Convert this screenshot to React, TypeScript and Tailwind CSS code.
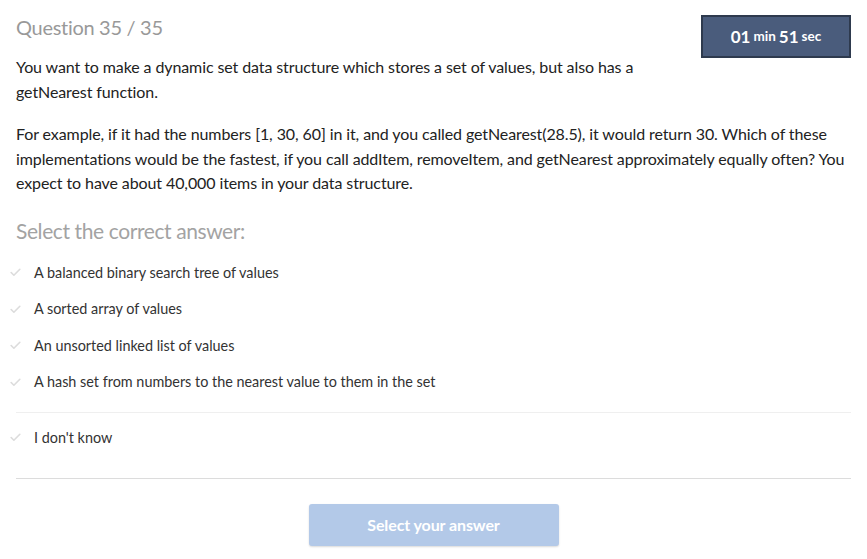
import { Check } from "lucide-react";

const options = [
	"A balanced binary search tree of values",
	"A sorted array of values",
	"An unsorted linked list of values",
	"A hash set from numbers to the nearest value to them in the set",
];

function Option({ label }: { label: string }) {
	return (
		<div className="flex items-center h-[36.5px] -ml-[7px]">
			<Check size={13} strokeWidth={3} className="text-[#dcdcdc] mr-[12px]" />
			<span className="text-[14.4px] text-[#333]">{label}</span>
		</div>
	);
}

export default function App() {
	return (
		<div
			className="w-[867px] h-[559px] bg-white px-4 pt-[14px] overflow-hidden"
			style={{ fontFamily: "Lato, 'Open Sans', sans-serif" }}
		>
			<div className="flex justify-between items-start">
				<h1 className="text-[20px] text-[#999] leading-[26px] tracking-[-0.3px]">
					Question 35 / 35
				</h1>
				<div className="w-[150px] h-[43px] mt-px bg-[#4a5c7c] border-2 border-[#2e3a4e] flex items-center justify-center text-white font-bold">
					<span className="text-[17px]">01</span>
					<span className="text-[13.5px] ml-[3px] mr-[3px]">min</span>
					<span className="text-[17px]">51</span>
					<span className="text-[13.5px] ml-[3px]">sec</span>
				</div>
			</div>

			<div className="text-[16px] text-[#222] leading-[24.5px] tracking-[-0.1px] -mt-[3px]">
				<p>
					You want to make a dynamic set data structure which stores a set of values, but also has a
					<br />
					getNearest function.
				</p>
				<p className="mt-[18px]">
					For example, if it had the numbers [1, 30, 60] in it, and you called getNearest(28.5), it would
					return 30. Which of these implementations would be the fastest, if you call addItem, removeItem,
					and getNearest approximately equally often? You expect to have about 40,000 items in your data
					structure.
				</p>
			</div>

			<h2 className="text-[21px] text-[#a3a3a3] mt-[22px] leading-[26px] tracking-[-0.4px]">
				Select the correct answer:
			</h2>

			<div className="mt-[11px]">
				{options.map((o) => (
					<Option key={o} label={o} />
				))}
			</div>
			<div className="border-t border-[#efefef] mt-[11px] pt-[7px]">
				<Option label="I don't know" />
			</div>

			<div className="border-t border-[#dcdcdc] mt-[22px] flex justify-center pt-[25px]">
				<button className="w-[250px] h-[42px] rounded-[3px] bg-[#b3c9e8] text-white font-bold text-[16px] tracking-[-0.1px] shadow-[0_1px_2px_rgba(0,0,0,0.15)]">
					Select your answer
				</button>
			</div>
		</div>
	);
}
